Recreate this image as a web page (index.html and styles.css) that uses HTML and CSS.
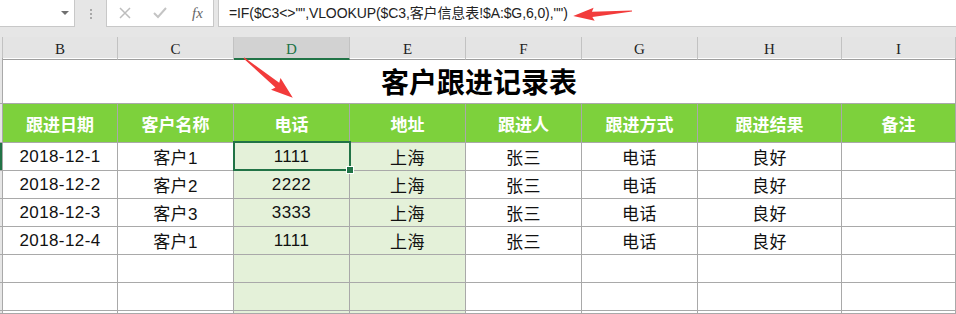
FILE: index.html
```html
<!DOCTYPE html>
<html lang="zh-CN">
<head>
    <meta charset="UTF-8">
    <meta name="viewport" content="width=device-width, initial-scale=1.0">
    <title>客户跟进记录表</title>
    <link rel="stylesheet" href="styles.css">
</head>
<body>
    <div class="toolbar">
        <div class="namebox"><span class="caret"></span></div>
        <div class="grip"><i></i><i></i><i></i></div>
        <div class="fbtns">
            <svg width="14" height="14" viewBox="0 0 14 14"><path d="M2 2 L12 12 M12 2 L2 12" stroke="#bdbdbd" stroke-width="1.5" fill="none"/></svg>
            <svg width="16" height="14" viewBox="0 0 16 14"><path d="M2 7 L6 11 L14 2" stroke="#c4c4c4" stroke-width="2" fill="none"/></svg>
            <span class="fx">fx</span>
        </div>
        <div class="formula">=IF($C3&lt;&gt;"",VLOOKUP($C3,客户信息表!$A:$G,6,0),"")</div>
    </div>

    <div class="sheet">
        <div class="row colhead">
            <div class="stub"></div>
            <div>B</div><div>C</div><div class="sel">D</div><div>E</div>
            <div>F</div><div>G</div><div>H</div><div>I</div>
        </div>
        <div class="row title">
            <div class="stub"></div>
            <div class="merged">客户跟进记录表</div>
        </div>
        <div class="row head">
            <div class="stub"></div>
            <div>跟进日期</div><div>客户名称</div><div>电话</div><div>地址</div>
            <div>跟进人</div><div>跟进方式</div><div>跟进结果</div><div>备注</div>
        </div>
        <div class="row data">
            <div class="stub active"></div>
            <div>2018-12-1</div><div>客户1</div><div class="hl current">1111</div><div class="hl">上海</div>
            <div>张三</div><div>电话</div><div>良好</div><div></div>
        </div>
        <div class="row data">
            <div class="stub"></div>
            <div>2018-12-2</div><div>客户2</div><div class="hl">2222</div><div class="hl">上海</div>
            <div>张三</div><div>电话</div><div>良好</div><div></div>
        </div>
        <div class="row data">
            <div class="stub"></div>
            <div>2018-12-3</div><div>客户3</div><div class="hl">3333</div><div class="hl">上海</div>
            <div>张三</div><div>电话</div><div>良好</div><div></div>
        </div>
        <div class="row data">
            <div class="stub"></div>
            <div>2018-12-4</div><div>客户1</div><div class="hl">1111</div><div class="hl">上海</div>
            <div>张三</div><div>电话</div><div>良好</div><div></div>
        </div>
        <div class="row data">
            <div class="stub"></div>
            <div></div><div></div><div class="hl"></div><div class="hl"></div>
            <div></div><div></div><div></div><div></div>
        </div>
        <div class="row data">
            <div class="stub"></div>
            <div></div><div></div><div class="hl"></div><div class="hl"></div>
            <div></div><div></div><div></div><div></div>
        </div>
        <div class="row data last">
            <div class="stub"></div>
            <div></div><div></div><div class="hl"></div><div class="hl"></div>
            <div></div><div></div><div></div><div></div>
        </div>
    </div>

    <!-- callout arrows drawn over the sheet -->
    <svg class="arrows" width="956" height="314" viewBox="0 0 956 314">
        <polygon transform="translate(632 11) rotate(175.2)" points="0,-0.6 40,-2.6 38,-6.5 59,0 38,6.5 40,2.6 0,0.6" fill="#f23b3b"/>
        <polygon transform="translate(244 58) rotate(39.2)" points="0,-0.7 43,-3 41,-7.5 63,0 41,7.5 43,3 0,0.7" fill="#f23b3b"/>
    </svg>
</body>
</html>
```

FILE: styles.css
```css
body {
    margin: 0;
    width: 956px;
    height: 314px;
    overflow: hidden;
    position: relative;
    background: #fff;
    font-family: "Liberation Sans", "Noto Sans CJK SC", sans-serif;
}

.toolbar {
    display: flex;
    align-items: flex-start;
    height: 37px;
    background: #e6e6e6;
}
.namebox {
    box-sizing: border-box;
    width: 75px;
    height: 27px;
    background: #fff;
    border: 1px solid #c8c8c8;
    border-top: none;
    border-left: none;
    display: flex;
    align-items: center;
    justify-content: flex-end;
    padding-right: 5px;
}
.caret {
    width: 0;
    height: 0;
    border-left: 4px solid transparent;
    border-right: 4px solid transparent;
    border-top: 4px solid #707070;
}
.grip {
    width: 31px;
    height: 27px;
    display: flex;
    flex-direction: column;
    align-items: center;
    justify-content: center;
    gap: 2px;
}
.grip i {
    width: 2px;
    height: 2px;
    background: #a8a8a8;
}
.fbtns {
    box-sizing: border-box;
    width: 108px;
    height: 27px;
    background: #fff;
    border: 1px solid #c8c8c8;
    border-top: none;
    display: flex;
    align-items: center;
    padding-left: 11px;
    gap: 20px;
}
.fx {
    font-family: "Liberation Serif", serif;
    font-style: italic;
    font-size: 15px;
    color: #666;
    margin-left: 4px;
}
.formula {
    box-sizing: border-box;
    flex: 1;
    height: 27px;
    margin-left: 4px;
    background: #fff;
    border: 1px solid #c8c8c8;
    border-top: none;
    border-right: none;
    padding-left: 10px;
    line-height: 26px;
    font-size: 14px;
    letter-spacing: -0.1px;
    color: #222;
    white-space: nowrap;
}

.row {
    display: grid;
    grid-template-columns: 3px 115px 116px 116px 116px 116px 116px 144px 114px;
}
.row > div {
    box-sizing: border-box;
    border-right: 1px solid #a9a9a9;
    border-bottom: 1px solid #a9a9a9;
    display: flex;
    align-items: center;
    justify-content: center;
    white-space: nowrap;
}
.row > .stub {
    background: #e6e6e6;
}

.colhead {
    height: 21px;
    background: #e4e4e4;
}
.colhead > div {
    border-right-color: #c2c2c2;
    border-bottom-color: #9e9e9e;
    font-family: "Liberation Serif", serif;
    font-size: 15px;
    color: #222;
    padding-top: 3px;
}
.colhead > .sel {
    background: #d2d2d2;
    color: #217346;
    border-bottom: 2px solid #217346;
    padding-top: 4px;
}

.title {
    height: 46px;
}
.merged {
    grid-column: span 8;
    font-size: 28px;
    font-weight: bold;
    color: #000;
}

.head {
    height: 39px;
}
.head > div {
    background: #7dd13c;
    color: #fff;
    font-size: 17px;
    font-weight: bold;
}
.head > .stub {
    background: #e6e6e6;
}

.data {
    height: 28px;
    font-size: 17px;
    letter-spacing: 0.4px;
    color: #111;
}
.data.last {
    height: 3px;
}
.data > .hl {
    background: #e4f1d9;
}
.data > .stub.active {
    background: #217346;
}
.current {
    position: relative;
}
.current::before {
    content: "";
    position: absolute;
    left: -1px;
    top: -2px;
    right: -2px;
    bottom: -1px;
    border: 2px solid #217346;
}
.current::after {
    content: "";
    position: absolute;
    right: -5px;
    bottom: -4px;
    width: 6px;
    height: 6px;
    background: #217346;
    border: 1px solid #fff;
}

.arrows {
    position: absolute;
    left: 0;
    top: 0;
    pointer-events: none;
}
```
